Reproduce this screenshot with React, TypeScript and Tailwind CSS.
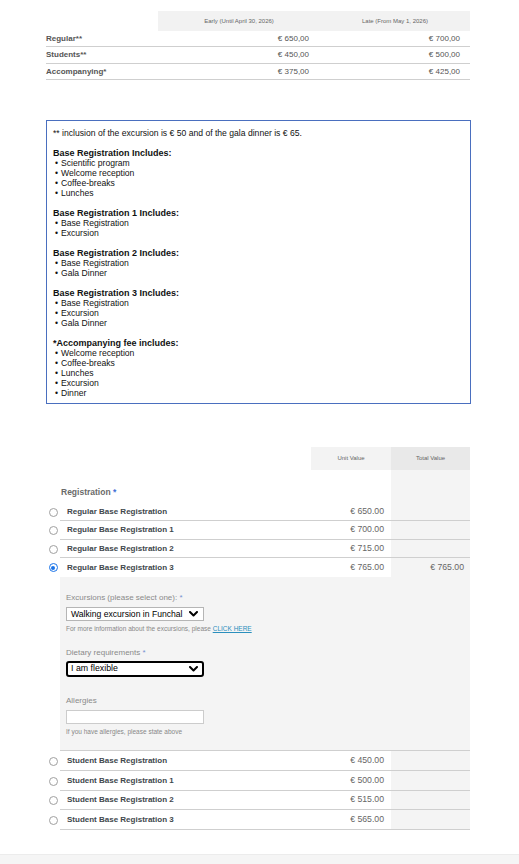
import React from "react";

const font = "font-['Liberation_Sans',Arial,sans-serif]";

function Radio({ checked }: { checked?: boolean }) {
  if (checked) {
    return (
      <span className="w-[9px] h-[9px] rounded-full border-[1.5px] border-[#1a73e8] bg-white flex items-center justify-center">
        <span className="w-[4px] h-[4px] rounded-full bg-[#1a73e8]" />
      </span>
    );
  }
  return <span className="w-[9px] h-[9px] rounded-full border border-[#a0a0a0] bg-white" />;
}

function Chevron() {
  return (
    <svg width="9" height="6" viewBox="0 0 9 6" className="shrink-0">
      <polyline points="1,1 4.5,4.5 8,1" fill="none" stroke="#000" strokeWidth="2" strokeLinecap="round" strokeLinejoin="round" />
    </svg>
  );
}

function RegRow({
  label,
  price,
  total,
  checked,
  border = true,
  h,
}: {
  label: string;
  price: string;
  total?: string;
  checked?: boolean;
  border?: boolean;
  h: string;
}) {
  return (
    <div className={`flex ${h}`}>
      <div className="w-[14px] flex items-center justify-center">
        <Radio checked={checked} />
      </div>
      <div className={`flex w-[410px] ${border ? "border-b border-[#cfcfcf]" : ""}`}>
        <div className="w-[251px] pl-[7px] flex items-center text-[8px] font-bold text-[#40474c]">{label}</div>
        <div className="w-[80px] pr-[7px] flex items-center justify-end text-[8.7px] text-[#666]">{price}</div>
        <div className="w-[79px] pr-[6px] flex items-center justify-end bg-[#f4f4f4] text-[8.7px] text-[#666]">
          {total ?? ""}
        </div>
      </div>
    </div>
  );
}

function Bullet({ children }: { children: React.ReactNode }) {
  return (
    <div className="flex h-[10px] items-center pl-[2px] text-[8.6px]">
      <span className="w-[6px]">•</span>
      <span>{children}</span>
    </div>
  );
}

function Line({ children, bold }: { children?: React.ReactNode; bold?: boolean }) {
  return (
    <div className={`h-[10px] flex items-center ${bold ? "font-bold text-[9px]" : "text-[8.6px]"}`}>{children}</div>
  );
}

export default function App() {
  return (
    <div className={`w-[519px] min-h-[864px] bg-white ${font}`}>
      {/* Top price table */}
      <div className="pt-[11px] pl-[46px]">
        <div className="grid grid-cols-[112px_162px_150px] w-[424px] h-[20px]">
          <div />
          <div className="bg-[#f2f2f2] flex items-center justify-center text-[6px] text-[#666]">
            Early (Until April 30, 2026)
          </div>
          <div className="bg-[#f2f2f2] flex items-center justify-center text-[6px] text-[#666]">
            Late (From May 1, 2026)
          </div>
        </div>
        {[
          ["Regular**", "€ 650,00", "€ 700,00", "h-[16px]"],
          ["Students**", "€ 450,00", "€ 500,00", "h-[17px]"],
          ["Accompanying*", "€ 375,00", "€ 425,00", "h-[16px]"],
        ].map(([l, a, b, h]) => (
          <div key={l} className={`grid grid-cols-[112px_162px_150px] w-[424px] ${h} border-b border-[#cfcfcf]`}>
            <div className="flex items-center text-[8px] font-bold text-[#555]">{l}</div>
            <div className="flex items-center justify-end pr-[11px] text-[8px] text-[#555]">{a}</div>
            <div className="flex items-center justify-end pr-[10px] text-[8px] text-[#555]">{b}</div>
          </div>
        ))}
      </div>

      {/* Info box */}
      <div className="ml-[46px] mt-[40px] w-[425px] h-[284px] border border-[#4a6fbf] pt-[7px] pl-[6px] pb-[5px] text-[#111] leading-[10px]">
        <Line>** inclusion of the excursion is € 50 and of the gala dinner is € 65.</Line>
        <Line />
        <Line bold>Base Registration Includes:</Line>
        <Bullet>Scientific program</Bullet>
        <Bullet>Welcome reception</Bullet>
        <Bullet>Coffee-breaks</Bullet>
        <Bullet>Lunches</Bullet>
        <Line />
        <Line bold>Base Registration 1 Includes:</Line>
        <Bullet>Base Registration</Bullet>
        <Bullet>Excursion</Bullet>
        <Line />
        <Line bold>Base Registration 2 Includes:</Line>
        <Bullet>Base Registration</Bullet>
        <Bullet>Gala Dinner</Bullet>
        <Line />
        <Line bold>Base Registration 3 Includes:</Line>
        <Bullet>Base Registration</Bullet>
        <Bullet>Excursion</Bullet>
        <Bullet>Gala Dinner</Bullet>
        <Line />
        <Line bold>*Accompanying fee includes:</Line>
        <Bullet>Welcome reception</Bullet>
        <Bullet>Coffee-breaks</Bullet>
        <Bullet>Lunches</Bullet>
        <Bullet>Excursion</Bullet>
        <Bullet>Dinner</Bullet>
      </div>

      {/* Registration table */}
      <div className="ml-[46px] mt-[43px] w-[424px]">
        <div className="flex h-[23px]">
          <div className="w-[265px]" />
          <div className="w-[80px] bg-[#f3f3f3] flex items-center justify-center text-[6px] text-[#666]">Unit Value</div>
          <div className="w-[79px] bg-[#e9e9e9] flex items-center justify-center text-[6px] text-[#666]">Total Value</div>
        </div>
        <div className="flex h-[33px]">
          <div className="w-[14px]" />
          <div className="w-[251px] pl-[1px] pb-[6px] flex items-end text-[8.5px] font-bold text-[#6a6a6a] leading-[10px]">
            Registration&nbsp;<span className="text-[#3f6fd6]">*</span>
          </div>
          <div className="w-[80px]" />
          <div className="w-[79px] bg-[#f4f4f4]" />
        </div>

        <RegRow h="h-[18px]" label="Regular Base Registration" price="€ 650.00" />
        <RegRow h="h-[19px]" label="Regular Base Registration 1" price="€ 700.00" />
        <RegRow h="h-[18px]" label="Regular Base Registration 2" price="€ 715.00" />
        <RegRow h="h-[19px]" label="Regular Base Registration 3" price="€ 765.00" total="€ 765.00" checked border={false} />

        {/* Expanded panel */}
        <div className="flex">
          <div className="w-[14px]" />
          <div className="w-[410px] h-[174px] bg-[#f4f4f4] border-b border-[#cfcfcf] pl-[6px] pt-[16px] flex flex-col">
            <div className="h-[10px] flex items-center text-[8px] text-[#8a8a8a]">
              Excursions (please select one):&nbsp;<span className="text-[#7a8fd0]">*</span>
            </div>
            <div className="mt-[4px] w-[138px] h-[14px] bg-white border border-[#b5b5b5] flex items-center justify-between pl-[4px] pr-[5px] text-[8.6px] text-black">
              <span className="whitespace-nowrap">Walking excursion in Funchal</span>
              <Chevron />
            </div>
            <div className="mt-[4px] h-[8px] flex items-center text-[6.5px] text-[#888] whitespace-nowrap">
              For more information about the excursions, please&nbsp;
              <span className="text-[#2a8fbd] underline">CLICK HERE</span>
            </div>
            <div className="mt-[15px] h-[10px] flex items-center text-[8px] text-[#8a8a8a]">
              Dietary requirements&nbsp;<span className="text-[#7a8fd0]">*</span>
            </div>
            <div className="mt-[3px] w-[138px] h-[16px] bg-white border-2 border-black rounded-[3px] flex items-center justify-between pl-[3px] pr-[4px] text-[8.8px] text-black">
              <span>I am flexible</span>
              <Chevron />
            </div>
            <div className="mt-[19px] h-[10px] flex items-center text-[8px] text-[#8a8a8a]">Allergies</div>
            <div className="mt-[4px] w-[138px] h-[14px] bg-white border border-[#cccccc]" />
            <div className="mt-[4px] h-[8px] flex items-center text-[6.5px] text-[#888]">
              If you have allergies, please state above
            </div>
          </div>
        </div>

        <RegRow h="h-[20px]" label="Student Base Registration" price="€ 450.00" />
        <RegRow h="h-[20px]" label="Student Base Registration 1" price="€ 500.00" />
        <RegRow h="h-[19px]" label="Student Base Registration 2" price="€ 515.00" />
        <RegRow h="h-[20px]" label="Student Base Registration 3" price="€ 565.00" />
      </div>

      <div className="mt-[24px] h-[12px] bg-[#f5f5f5] border-t border-[#ececec]" />
    </div>
  );
}
